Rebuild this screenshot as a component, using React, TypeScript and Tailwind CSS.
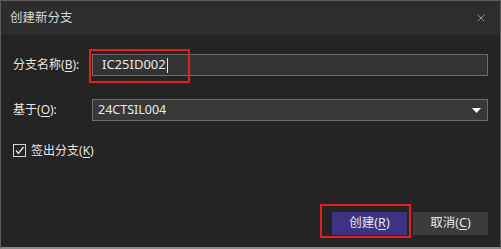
import { X } from "lucide-react";

const FONT = { fontFamily: '"Noto Sans", "Noto Sans CJK SC", sans-serif' };

function Acc({ k }: { k: string }) {
  return (
    <>
      (<span className="underline underline-offset-2">{k}</span>)
    </>
  );
}

export default function App() {
  return (
    <div
      style={FONT}
      className="relative h-[249px] w-[501px] overflow-hidden border border-[#5c5c5c] border-b-2 border-b-[#8a8a8a] bg-[#242424] text-[12px] text-[#e6e6e6]"
    >
      {/* title bar */}
      <div className="flex h-[34px] items-center justify-between bg-[#2d2d2d] pl-[9px] pr-[13px]">
        <span className="text-[12.5px] text-[#d8d8d8]">创建新分支</span>
        <X className="h-[12px] w-[12px] text-[#cfcfcf]" strokeWidth={1.25} />
      </div>

      <div className="flex flex-col px-[12px]">
        {/* branch name */}
        <div className="mt-[19px] flex h-[22px] items-center">
          <span className="w-[79px]">
            分支名称<Acc k="B" />:
          </span>
          <div className="relative flex h-[22px] flex-1 items-center border border-[#6b6b74] bg-[#333333] pl-[9px] text-[13px] text-[#e8e8e8]">
            IC25ID002
            <span className="ml-[1px] h-[15px] w-px bg-[#e8e8e8]" />
            <div className="pointer-events-none absolute left-[-4px] top-[-6px] h-[34px] w-[101px] border-2 border-[#e81e1e]" />
          </div>
        </div>

        {/* based on */}
        <div className="mt-[23px] flex h-[22px] items-center">
          <span className="w-[79px]">
            基于<Acc k="O" />:
          </span>
          <div className="flex h-[22px] flex-1 items-center justify-between border border-[#6b6b74] bg-[#383838] pl-[5px] pr-[5px] text-[12.5px] text-[#e8e8e8]">
            24CTSIL004
            <svg width="9" height="5" viewBox="0 0 9 5" className="mr-[1px]">
              <polygon points="0,0 9,0 4.5,5" fill="#ffffff" />
            </svg>
          </div>
        </div>

        {/* checkout */}
        <div className="mt-[23px] flex h-[13px] items-center gap-[5px]">
          <span className="flex h-[13px] w-[13px] items-center justify-center border border-[#d6d6d6]">
            <svg width="11" height="11" viewBox="0 0 11 11">
              <path d="M2 5.5 L4.5 8.5 L9.5 2" fill="none" stroke="#e8e8e8" strokeWidth="1.4" />
            </svg>
          </span>
          <span>
            签出分支<Acc k="K" />
          </span>
        </div>

        {/* buttons */}
        <div className="mt-[55px] flex justify-end gap-[6px]">
          <div className="relative flex h-[23px] w-[75px] items-center justify-center bg-[#3e3283] text-[12.5px]">
            <span>
              创建<Acc k="R" />
            </span>
            <div className="pointer-events-none absolute left-[-12px] top-[-8px] h-[34px] w-[91px] border-2 border-[#e81e1e]" />
          </div>
          <div className="flex h-[23px] w-[75px] items-center justify-center bg-[#3c3c3c] text-[12.5px]">
            <span>
              取消<Acc k="C" />
            </span>
          </div>
        </div>
      </div>
    </div>
  );
}
